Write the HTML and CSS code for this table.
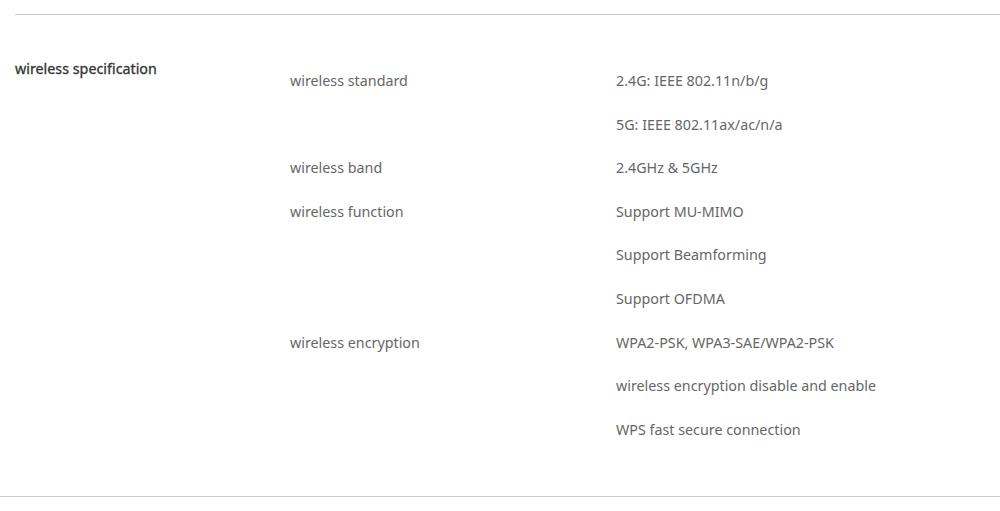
FILE: index.html
```html
<!DOCTYPE html>
<html>
<head>
    <title>wireless specification</title>
    <link rel="stylesheet" href="styles.css">
</head>
<body>
    <div class="spec">
        <h3 class="spec-title">wireless specification</h3>
        <div class="spec-table">
            <div class="label">wireless standard</div>
            <div class="values">
                <p>2.4G: IEEE 802.11n/b/g</p>
                <p>5G: IEEE 802.11ax/ac/n/a</p>
            </div>

            <div class="label">wireless band</div>
            <div class="values">
                <p>2.4GHz &amp; 5GHz</p>
            </div>

            <div class="label">wireless function</div>
            <div class="values">
                <p>Support MU-MIMO</p>
                <p>Support Beamforming</p>
                <p>Support OFDMA</p>
            </div>

            <div class="label">wireless encryption</div>
            <div class="values">
                <p>WPA2-PSK, WPA3-SAE/WPA2-PSK</p>
                <p>wireless encryption disable and enable</p>
                <p>WPS fast secure connection</p>
            </div>
        </div>
    </div>
    <div class="bottom-rule"></div>
</body>
</html>
```

FILE: styles.css
```css
body {
    margin: 0;
    background: #fff;
    font-family: "Noto Sans", "Open Sans", sans-serif;
    font-size: 14.3px;
    color: #666;
}
.spec {
    margin: 14px 0 0 15px;
    border-top: 1px solid #ccc;
    padding: 44px 0 33px;
    display: flex;
}
.spec-title {
    width: 275px;
    margin: 0;
    font-size: 14.3px;
    font-weight: normal;
    color: #333;
    line-height: 20px;
    -webkit-text-stroke: 0.3px #333;
}
.spec-table {
    flex: 1;
    display: grid;
    grid-template-columns: 326px 1fr;
    padding-top: 12px;
}
.label,
.values p {
    line-height: 20px;
}
.values p {
    margin: 0 0 23.6px;
}
.label {
    padding-bottom: 23.6px;
}
.bottom-rule {
    border-top: 1px solid #ccc;
}
```
